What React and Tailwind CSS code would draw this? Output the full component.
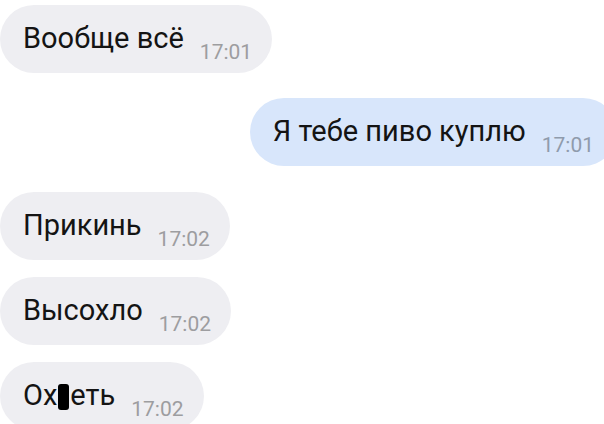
import React from "react";

const messages = [
  { id: 1, text: "Вообще всё", time: "17:01", mine: false },
  { id: 2, text: "Я тебе пиво куплю", time: "17:01", mine: true },
  { id: 3, text: "Прикинь", time: "17:02", mine: false },
  { id: 4, text: "Высохло", time: "17:02", mine: false },
  { id: 5, text: "censored", time: "17:02", mine: false },
];

function Bubble({ msg }) {
  return (
    <div
      className={`flex h-[68px] items-start rounded-full pt-[18px] pl-[23px] ${
        msg.mine ? "bg-[#d8e6fb] -mr-[13px] pr-[23px]" : "bg-[#eeeef2] pr-[20px]"
      }`}
    >
      <span className="text-[29px] leading-[30px] text-[#141414] whitespace-nowrap">
        {msg.text === "censored" ? (
          <>
            Ох
            <span className="inline-block w-[11px] h-[26px] bg-black rounded-[3px] align-[-5px] mx-[1px]" />
            еть
          </>
        ) : (
          msg.text
        )}
      </span>
      <span
        className={`ml-[16px] mt-[19px] text-[21px] leading-[21px] whitespace-nowrap ${
          msg.mine ? "text-[#8f9bac]" : "text-[#9d9da0]"
        }`}
      >
        {msg.time}
      </span>
    </div>
  );
}

export default function App() {
  return (
    <div
      className="w-[604px] h-[424px] overflow-hidden bg-white pt-[5px]"
      style={{ fontFamily: "Roboto, 'Noto Sans', sans-serif" }}
    >
      <div className="flex flex-col">
        <div className="flex">
          <Bubble msg={messages[0]} />
        </div>
        <div className="flex justify-end mt-[25px]">
          <Bubble msg={messages[1]} />
        </div>
        <div className="flex mt-[26px]">
          <Bubble msg={messages[2]} />
        </div>
        <div className="flex mt-[17px]">
          <Bubble msg={messages[3]} />
        </div>
        <div className="flex mt-[17px]">
          <Bubble msg={messages[4]} />
        </div>
      </div>
    </div>
  );
}
